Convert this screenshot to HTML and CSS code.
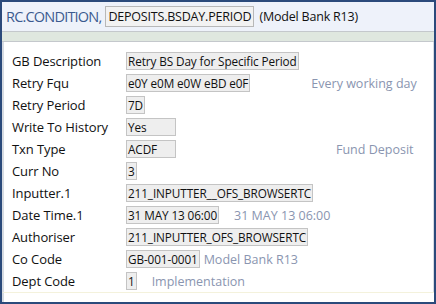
FILE: index.html
```html
<!DOCTYPE html>
<html lang="en">
<head>
    <meta charset="UTF-8">
    <title>RC.CONDITION</title>
    <link rel="stylesheet" href="styles.css">
</head>
<body>
    <div class="frame">
        <div class="header">
            <span class="app">RC.CONDITION,</span>
            <span class="record">DEPOSITS.BSDAY.PERIOD</span>
            <span class="company">(Model Bank R13)</span>
        </div>
        <div class="strip"></div>

        <div class="content">
            <div class="row">
                <span class="label">GB Description</span>
                <span class="value">Retry BS Day for Specific Period</span>
            </div>
            <div class="row">
                <span class="label">Retry Fqu</span>
                <span class="value">e0Y e0M e0W eBD e0F</span>
                <span class="enri enri-far">Every working day</span>
            </div>
            <div class="row">
                <span class="label">Retry Period</span>
                <span class="value">7D</span>
            </div>
            <div class="row">
                <span class="label">Write To History</span>
                <span class="value fixed">Yes</span>
            </div>
            <div class="row">
                <span class="label">Txn Type</span>
                <span class="value fixed">ACDF</span>
                <span class="enri enri-type">Fund Deposit</span>
            </div>
            <div class="row">
                <span class="label">Curr No</span>
                <span class="value">3</span>
            </div>
            <div class="row">
                <span class="label">Inputter.1</span>
                <span class="value">211_INPUTTER__OFS_BROWSERTC</span>
            </div>
            <div class="row">
                <span class="label">Date Time.1</span>
                <span class="value">31 MAY 13 06:00</span>
                <span class="enri">31 MAY 13 06:00</span>
            </div>
            <div class="row">
                <span class="label">Authoriser</span>
                <span class="value">211_INPUTTER_OFS_BROWSERTC</span>
            </div>
            <div class="row">
                <span class="label">Co Code</span>
                <span class="value">GB-001-0001</span>
                <span class="enri enri-near">Model Bank R13</span>
            </div>
            <div class="row">
                <span class="label">Dept Code</span>
                <span class="value">1</span>
                <span class="enri">Implementation</span>
            </div>
        </div>
        <div class="foot"></div>
    </div>
</body>
</html>
```

FILE: styles.css
```css
body {
    margin: 0;
    font-family: "Open Sans", "DejaVu Sans", sans-serif;
}

.frame {
    width: 432px;
    height: 300px;
    border: 2px solid #2b4a7b;
    background: #ffffff;
    display: flex;
    flex-direction: column;
}

.header {
    height: 30px;
    background: #eef2fa;
    border-bottom: 1px solid #c4c8cc;
    display: flex;
    align-items: center;
    padding-left: 4px;
    white-space: nowrap;
}

.app {
    color: #3b5a8f;
    font-size: 14.5px;
    letter-spacing: -0.8px;
}

.record {
    margin-left: 4px;
    padding: 0 2px;
    height: 19px;
    line-height: 19px;
    border: 1px solid #b8b8b8;
    background: #f2f2f2;
    font-size: 12.5px;
    letter-spacing: -0.2px;
    color: #111;
}

.company {
    margin-left: 5px;
    font-size: 12.5px;
    letter-spacing: -0.2px;
    color: #111;
}

.strip {
    height: 9px;
    background: #dfe7df;
    border-bottom: 1px solid #c4c8cc;
}

.content {
    flex: 1;
    border-left: 2px solid #d6dbe2;
    border-right: 1px solid #d6dbe2;
    padding: 8px 0 0 8px;
    font-size: 11.75px;
}

.row {
    height: 22px;
    display: flex;
    align-items: center;
}

.label {
    width: 114px;
    font-size: 13px;
    color: #111;
    letter-spacing: -0.1px;
}

.value {
    height: 16px;
    line-height: 16px;
    padding: 0 1px;
    border: 1px solid #c4c4c4;
    background: #eeeeee;
    color: #111;
    letter-spacing: -0.1px;
    white-space: nowrap;
}

.fixed {
    width: 46px;
}

.enri {
    margin-left: 15px;
    color: #8a95b0;
    font-size: 12.5px;
}

.enri-near {
    margin-left: 4px;
}

.enri-far {
    margin-left: 61px;
}

.enri-type {
    margin-left: 160px;
}

.foot {
    height: 9px;
    border-top: 1px solid #f4f2dc;
    border-left: 2px solid #d6dbe2;
}
```
